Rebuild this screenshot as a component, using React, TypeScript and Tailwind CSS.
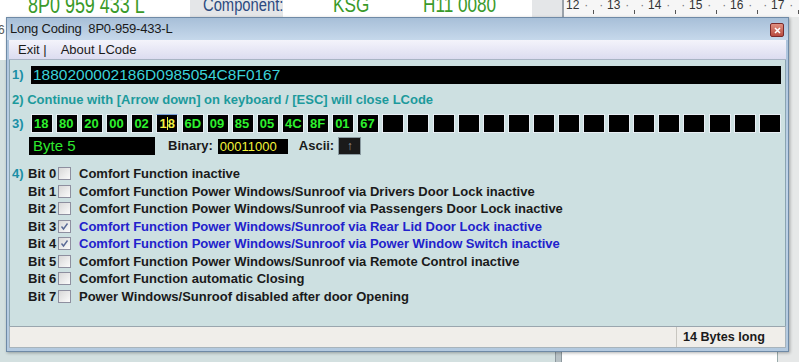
import React from 'react';

const hexBytes = ['18', '80', '20', '00', '02', '18', '6D', '09', '85', '05', '4C', '8F', '01', '67'];

const bits = [
  { label: 'Comfort Function inactive', on: false },
  { label: 'Comfort Function Power Windows/Sunroof via Drivers Door Lock inactive', on: false },
  { label: 'Comfort Function Power Windows/Sunroof via Passengers Door Lock inactive', on: false },
  { label: 'Comfort Function Power Windows/Sunroof via Rear Lid Door Lock inactive', on: true },
  { label: 'Comfort Function Power Windows/Sunroof via Power Window Switch inactive', on: true },
  { label: 'Comfort Function Power Windows/Sunroof via Remote Control inactive', on: false },
  { label: 'Comfort Function automatic Closing', on: false },
  { label: 'Power Windows/Sunroof disabled after door Opening', on: false },
];

function CheckBox({ on }: { on: boolean }) {
  return (
    <div className="w-[13px] h-[13px] border border-[#8e8f9f] bg-gradient-to-br from-[#d8d8d8] to-[#fbfbfb] flex items-center justify-center">
      {on && (
        <svg width="9" height="9" viewBox="0 0 9 9">
          <path d="M1.5 4.5 L3.5 7 L7.5 1.5" fill="none" stroke="#5a6a96" strokeWidth="1.4" />
        </svg>
      )}
    </div>
  );
}

function Ruler() {
  const nums = ['12', '13', '14', '15', '16', '17'];
  return (
    <div className="flex-1 min-w-0 h-full overflow-hidden bg-[#f6f6f6] border-l-2 border-[#9aa2aa] flex items-start pl-[2px] text-[12px] leading-[12px] text-[#333] font-['Liberation_Sans',Arial,sans-serif]">
      {nums.map((n) => (
        <div key={n} className="w-[41px] shrink-0 flex gap-[5px] -mt-[1px]">
          <span>{n}</span>
          <span className="text-[#777]">·</span>
          <span className="w-[1px] h-[4px] mt-[11px] bg-[#555]" />
          <span className="text-[#777]">·</span>
        </div>
      ))}
    </div>
  );
}

export default function App() {
  return (
    <div className="relative w-[799px] h-[362px] overflow-hidden bg-[#d3e0e0] font-['Liberation_Sans',Arial,sans-serif]">
      {/* background application */}
      <div className="flex h-[17px] bg-[#e4e6e8]">
        <div className="w-[190px] shrink-0 h-full bg-white overflow-hidden pl-[28px]">
          <div className="text-[23px] leading-[23px] -mt-[6px] text-[#3a9a2a] scale-x-[0.78] origin-left whitespace-nowrap">8P0 959 433 L</div>
        </div>
        <div className="w-[93px] shrink-0 h-full overflow-hidden pl-[13px]">
          <div className="text-[18px] leading-[18px] -mt-[4px] text-[#2c4a80] scale-x-[0.82] origin-left whitespace-nowrap">Component:</div>
        </div>
        <div className="w-[249px] shrink-0 h-full bg-white overflow-hidden flex pl-[50px]">
          <div className="w-[90px] text-[22px] leading-[22px] -mt-[6px] text-[#3a9a2a] scale-x-[0.78] origin-left whitespace-nowrap">KSG</div>
          <div className="text-[22px] leading-[22px] -mt-[6px] text-[#3a9a2a] scale-x-[0.78] origin-left whitespace-nowrap">H11 0080</div>
        </div>
        <div className="w-[30px] shrink-0 h-full" />
        <Ruler />
      </div>
      <div className="flex h-[345px]">
        <div className="w-[6px] shrink-0 h-full flex flex-col">
          <div className="h-[43px] bg-white text-[12px] text-[#555] leading-[14px] pt-[6px] -ml-[2px]">6</div>
          <div className="flex-1 bg-[#d3e0e0]" />
        </div>
        <div className="w-[549px] shrink-0 h-full bg-[#d3e0e0]" />
        <div className="w-[7px] shrink-0 h-full bg-[#b8c2c6] border-x border-[#8d989e]" />
        <div className="w-[216px] shrink-0 h-full bg-white border-r border-[#9aa]" />
        <div className="flex-1 h-full bg-[#e6e8e8]" />
      </div>

      {/* Long Coding window */}
      <div className="absolute left-[6px] top-[17px] w-[783px] h-[335px] flex flex-col border border-[#6f8aa6] bg-gradient-to-b from-[#a9c1da] via-[#c0d4e9] to-[#b3c9df] shadow-[1px_1px_3px_rgba(0,0,0,0.3)]">
        <div className="h-[22px] flex items-center justify-between pl-[3px] pr-[4px] bg-gradient-to-b from-[#a7bfd8] to-[#c6d8eb]">
          <span className="text-[13px] text-[#1a1a1a] tracking-[-0.2px]">Long Coding&nbsp; 8P0-959-433-L</span>
          <div className="w-[14px] h-[14px] mt-[2px] rounded-[2px] border border-[#7a2a2a] bg-gradient-to-b from-[#e09080] to-[#b84a40] flex items-center justify-center">
            <svg width="7" height="7" viewBox="0 0 7 7">
              <path d="M1 1 L6 6 M6 1 L1 6" stroke="#fff" strokeWidth="1.6" />
            </svg>
          </div>
        </div>
        <div className="mx-[2px] h-[20px] flex items-center gap-[14px] pl-[9px] bg-gradient-to-b from-[#f4f4fb] to-[#dcdcf0] border-b border-[#a8b4c4] text-[13px] text-[#1a1a1a]">
          <span>Exit |</span>
          <span>About LCode</span>
        </div>
        <div className="mx-[2px] flex-1 bg-[#cde0e1] border-x border-[#8aa4b0] pl-[2px] pr-[4px] flex flex-col">
          {/* 1) */}
          <div className="flex items-center mt-[6px] h-[18px]">
            <span className="w-[19px] text-[13px] font-bold text-[#1a8fa6]">1)</span>
            <div className="flex-1 h-[18px] bg-black text-[15.5px] leading-[18px] text-[#3cd2d8] pl-[2px]">1880200002186D0985054C8F0167</div>
          </div>
          {/* 2) */}
          <div className="mt-[8px] h-[16px] text-[13px] leading-[16px] font-bold text-[#1c9a9c]">
            2) Continue with [Arrow down] on keyboard / [ESC] will close LCode
          </div>
          {/* 3) */}
          <div className="flex items-center mt-[6px] h-[19px]">
            <span className="w-[19px] text-[13px] font-bold text-[#1a8fa6]">3)</span>
            <div className="flex-1 flex justify-between">
              {Array.from({ length: 30 }).map((_, i) => {
                const v = hexBytes[i];
                const sel = i === 5;
                return (
                  <div
                    key={i}
                    className={
                      sel
                        ? 'w-[22px] h-[19px] bg-black border border-[#e8eef4] border-t-[#7aa0d8] text-[13px] leading-[17px] font-bold text-[#f0f040] pl-[2px] flex'
                        : 'w-[22px] h-[19px] bg-black border border-[#e8eef4] text-[13px] leading-[17px] font-bold text-[#2ef02e] pl-[2px]'
                    }
                  >
                    {sel ? (
                      <>
                        <span>1</span>
                        <span className="w-[1px] h-[13px] mt-[2px] bg-[#f0f040]" />
                        <span>8</span>
                      </>
                    ) : (
                      v ?? ''
                    )}
                  </div>
                );
              })}
            </div>
          </div>
          {/* byte info */}
          <div className="flex items-center mt-[4px] h-[18px] pl-[17px]">
            <div className="w-[126px] h-[18px] bg-black text-[15px] leading-[18px] text-[#2ee82e] pl-[4px]">Byte 5</div>
            <span className="ml-[13px] text-[13px] font-bold text-[#1a1a1a]">Binary:</span>
            <div className="ml-[5px] w-[70px] h-[15px] bg-black text-[13px] leading-[15px] text-[#f4f43a] pl-[2px]">00011000</div>
            <span className="ml-[11px] text-[13px] font-bold text-[#1a1a1a]">Ascii:</span>
            <div className="ml-[4px] w-[23px] h-[18px] bg-[#1a1a1a] border border-[#8a9aa0] flex items-center justify-center">
              <span className="text-[12px] leading-[12px] text-[#9a9a9a]">↑</span>
            </div>
          </div>
          {/* 4) bits */}
          <div className="mt-[10px] flex flex-col">
            {bits.map((b, i) => (
              <div key={i} className="flex items-center h-[17.5px]">
                <span className="w-[16px] text-[13px] font-bold text-[#1a8fa6]">{i === 0 ? '4)' : ''}</span>
                <span className="w-[30px] text-[13px] font-bold text-[#1a1a1a] whitespace-nowrap">Bit {i}</span>
                <CheckBox on={b.on} />
                <span className={'ml-[8px] text-[13px] font-bold ' + (b.on ? 'text-[#2222cc]' : 'text-[#1a1a1a]')}>{b.label}</span>
              </div>
            ))}
          </div>
        </div>
        <div className="mx-[2px] h-[22px] flex bg-[#f0eeea] border border-[#a8b4bc] border-t-[#9aa6ae]">
          <div className="w-[667px] h-full border-r border-[#c8c6c0]" />
          <div className="flex-1 flex items-center pl-[6px] text-[12.6px] font-bold text-[#1a1a1a]">14 Bytes long</div>
        </div>
        <div className="h-[3px]" />
      </div>
    </div>
  );
}
